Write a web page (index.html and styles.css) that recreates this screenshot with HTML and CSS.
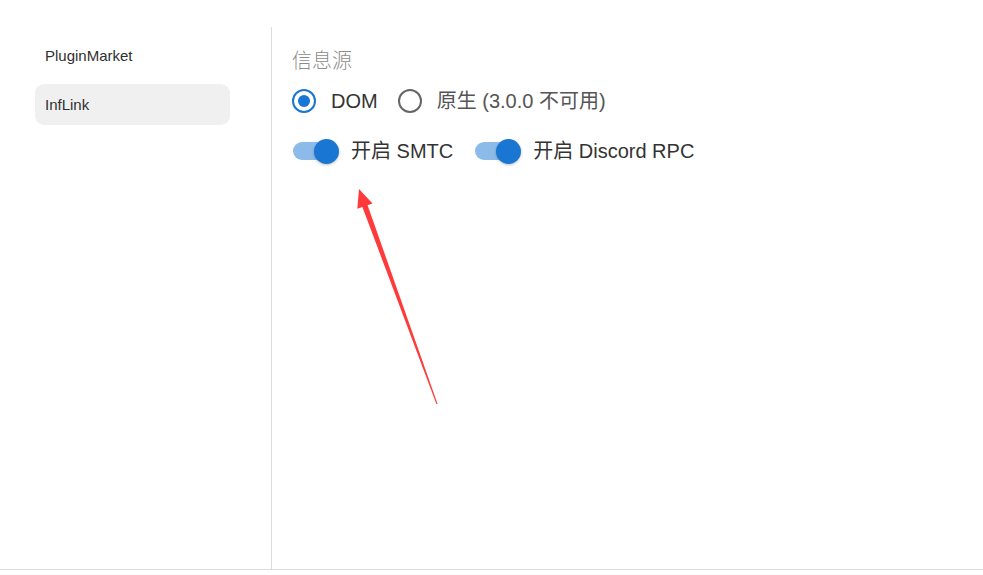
FILE: index.html
```html
<!DOCTYPE html>
<html lang="zh">
<head>
<meta charset="utf-8">
<link rel="stylesheet" href="styles.css">
</head>
<body>
<div class="frame">
  <aside class="sidebar">
    <div class="nav-item">PluginMarket</div>
    <div class="nav-item active">InfLink</div>
  </aside>
  <main class="content">
    <div class="title">信息源</div>
    <div class="radio-row">
      <label class="radio checked"><span class="circle"><span class="dot"></span></span><span class="rlabel">DOM</span></label>
      <label class="radio"><span class="circle"></span><span class="rlabel">原生 (3.0.0 不可用)</span></label>
    </div>
    <div class="switch-row">
      <label class="switch"><span class="track"><span class="thumb"></span></span><span class="slabel">开启 SMTC</span></label>
      <label class="switch"><span class="track"><span class="thumb"></span></span><span class="slabel">开启 Discord RPC</span></label>
    </div>
  </main>
</div>
<svg class="arrow" width="983" height="575" viewBox="0 0 983 575">
  <polygon fill="#ff3a3a" points="359,189 372.5,203.5 367.6,205.3 437.6,404 436.4,404 362.4,207 357.3,208.8"/>
</svg>
</body>
</html>
```
FILE: styles.css
```css
html, body {
  margin: 0;
  padding: 0;
  background: #ffffff;
}
body {
  width: 983px;
  height: 575px;
  overflow: hidden;
  font-family: "Liberation Sans", Arial, "Noto Sans CJK SC", sans-serif;
  color: #333;
}
.frame {
  margin-top: 27px;
  height: 542px;
  display: flex;
  border-bottom: 1px solid #dcdcdc;
}
.sidebar {
  width: 236px;
  padding: 8px 0 0 35px;
  border-right: 1px solid #dcdcdc;
  display: flex;
  flex-direction: column;
  gap: 8px;
}
.nav-item {
  width: 195px;
  height: 41px;
  box-sizing: border-box;
  padding-left: 10px;
  display: flex;
  align-items: center;
  font-size: 15px;
  color: #2f2f2f;
  border-radius: 9px;
}
.nav-item.active {
  background: #f0f0f0;
}
.content {
  flex: 1;
  padding: 20px 0 0 20px;
  display: flex;
  flex-direction: column;
}
.title {
  font-family: "Noto Sans CJK SC", sans-serif;
  font-size: 20px;
  line-height: 26px;
  color: #8c8c8c;
  font-weight: 300;
}
.radio-row {
  margin-top: 7px;
  display: flex;
  align-items: center;
  height: 42px;
  gap: 20px;
}
.radio {
  display: flex;
  align-items: center;
  gap: 15px;
  font-size: 20px;
  color: #333;
}
.circle {
  width: 24px;
  height: 24px;
  box-sizing: border-box;
  border: 2.5px solid #666;
  border-radius: 50%;
  display: flex;
  align-items: center;
  justify-content: center;
}
.radio.checked .circle {
  border-color: #1976d2;
}
.dot {
  width: 12px;
  height: 12px;
  border-radius: 50%;
  background: #1976d2;
}
.rlabel {
  line-height: 24px;
}
.radio:not(.checked) .rlabel {
  color: #555;
}
.switch-row {
  margin-top: 4px;
  display: flex;
  align-items: center;
  height: 50px;
  gap: 21px;
}
.switch {
  display: flex;
  align-items: center;
  gap: 14px;
  font-size: 20px;
  color: #333;
}
.track {
  margin-left: 1px;
  width: 44px;
  height: 18px;
  border-radius: 9px;
  background: #8dbbe9;
  display: flex;
  align-items: center;
  justify-content: flex-end;
}
.thumb {
  width: 25px;
  height: 25px;
  border-radius: 50%;
  background: #1976d2;
  margin-right: -2px;
  box-shadow: 0 1px 3px rgba(0,0,0,0.25);
}
.slabel {
  line-height: 24px;
}
.arrow {
  position: absolute;
  left: 0;
  top: 0;
  pointer-events: none;
}
```
